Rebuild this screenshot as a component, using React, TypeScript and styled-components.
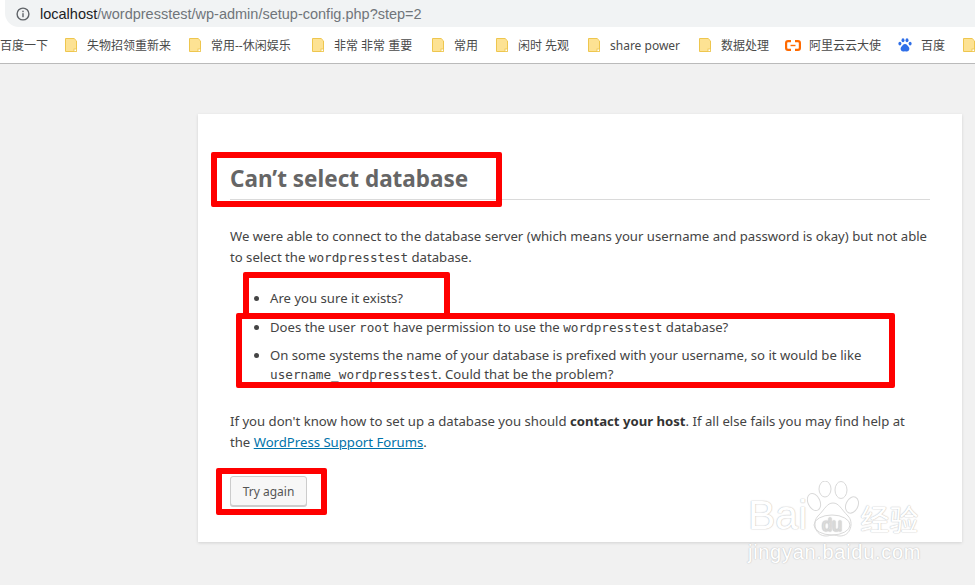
import React from 'react';
import styled, { createGlobalStyle } from 'styled-components';

const GlobalStyle = createGlobalStyle`
  html, body {
    margin: 0;
    padding: 0;
    background: #f1f1f1;
    overflow: hidden;
  }
`;

const cjk = '"Noto Sans", "Noto Sans CJK SC", sans-serif';

const Page = styled.div`
  position: relative;
  width: 975px;
  height: 585px;
  overflow: hidden;
  background: #f1f1f1;
  font-family: ${cjk};
`;

const AddressRow = styled.div`
  height: 27px;
  background: #fff;
  padding-left: 5px;
`;

const AddressBar = styled.div`
  display: flex;
  align-items: center;
  gap: 10px;
  height: 27px;
  padding-left: 11px;
  background: #f1f3f4;
  border-radius: 0 0 0 14px;
  font-family: "Liberation Sans", sans-serif;
  font-size: 14.5px;
  color: #70757a;
`;

const Host = styled.span`
  color: #202124;
`;

const Bookmarks = styled.div`
  display: flex;
  align-items: center;
  height: 36px;
  background: #fff;
  border-bottom: 1px solid #bababa;
  font-size: 12px;
  color: #4a4a4a;
  white-space: nowrap;
  overflow: hidden;
`;

const Bookmark = styled.div<{ $w: number; $gap: number }>`
  display: flex;
  align-items: center;
  flex: 0 0 ${p => p.$w}px;
  gap: ${p => p.$gap}px;
`;

const FirstBookmark = styled.div`
  flex: 0 0 65px;
`;

const Card = styled.main`
  box-sizing: border-box;
  width: 764px;
  height: 428px;
  margin: 50px 0 0 198px;
  padding: 32px;
  background: #fff;
  box-shadow: 0 1px 3px rgba(0, 0, 0, 0.13);
  color: #444;
  font-size: 13.15px;
  line-height: 21px;
`;

const Title = styled.h1`
  margin: 15px 0 0;
  height: 38px;
  border-bottom: 1px solid #dadada;
  color: #666;
  font-size: 22.5px;
  font-weight: 700;
  line-height: 35px;
`;

const Para = styled.p<{ $top: number }>`
  margin: ${p => p.$top}px 0 0;
`;

const Code = styled.code`
  font-family: "DejaVu Sans Mono", monospace;
  font-size: 12.7px;
  line-height: 1;
`;

const List = styled.ul`
  margin: 20px 0 0;
  padding: 0 0 0 40px;
`;

const Item = styled.li<{ $lh?: number }>`
  margin-bottom: 9px;
  line-height: ${p => p.$lh ?? 20}px;
`;

const Strong = styled.strong`
  color: #333;
`;

const SupportLink = styled.a`
  color: #0073aa;
  text-decoration: underline;
`;

const Button = styled.button`
  display: block;
  box-sizing: border-box;
  width: 77px;
  height: 30px;
  margin: 23px 0 0;
  padding: 0;
  background: #f7f7f7;
  border: 1px solid #ccc;
  border-radius: 3px;
  box-shadow: 0 1px 0 #ccc;
  color: #555;
  font-family: ${cjk};
  font-size: 12px;
`;

const RedBox = styled.div<{ $x: number; $y: number; $w: number; $h: number }>`
  position: absolute;
  left: ${p => p.$x}px;
  top: ${p => p.$y}px;
  width: ${p => p.$w}px;
  height: ${p => p.$h}px;
  box-sizing: border-box;
  border: 6px solid #ff0000;
  border-radius: 2px;
`;

const Watermark = styled.div`
  position: absolute;
  left: 748px;
  top: 481px;
  width: 220px;
  color: #fff;
  font-family: "Liberation Sans", sans-serif;
  text-shadow: 0 0 1.5px #c4c4c4, 0 0 1px #c4c4c4;
`;

const MarkRow = styled.div`
  display: flex;
  align-items: flex-end;
  height: 56px;
  font-size: 41px;
  line-height: 44px;
`;

const MarkCjk = styled.span`
  margin-left: 1px;
  font-family: "Noto Sans CJK SC", sans-serif;
  font-size: 29px;
  line-height: 38px;
`;

const MarkUrl = styled.div`
  margin-top: 3px;
  font-size: 20px;
  line-height: 24px;
  letter-spacing: 0.7px;
`;

const InfoIcon = () => (
  <svg width="14" height="14" viewBox="0 0 14 14" fill="none">
    <circle cx="7" cy="7" r="5.9" stroke="#5f6368" strokeWidth="1.4" />
    <rect x="6.3" y="6.2" width="1.4" height="4" fill="#5f6368" />
    <rect x="6.3" y="3.7" width="1.4" height="1.5" fill="#5f6368" />
  </svg>
);

const Folder = () => (
  <svg width="12" height="14" viewBox="0 0 12 14">
    <path d="M.5.5h8.6l2.4 2.4v10.600H.5z" fill="#fde293" stroke="#eec64e" />
    <rect x="9" y="11" width="2.5" height="2.5" fill="#fff" stroke="#eec64e" strokeWidth=".8" />
  </svg>
);

const AliyunIcon = () => (
  <svg width="16" height="11" viewBox="0 0 16 11" fill="none" stroke="#ff6a00" strokeWidth="2.2">
    <path d="M6 1.200H3Q1.100 1.200 1.100 3v5Q1.100 9.800 3 9.800h3" />
    <path d="M10 1.200h3q1.900 0 1.900 1.800v5q0 1.800-1.900 1.800h-3" />
    <path d="M5.500 5.500h5" strokeWidth="1.400" />
  </svg>
);

const BaiduIcon = () => (
  <svg width="14" height="14" viewBox="0 0 14 14" fill="#2f6fe8">
    <ellipse cx="1.900" cy="5.600" rx="1.500" ry="1.900" />
    <ellipse cx="5" cy="2.200" rx="1.500" ry="2" />
    <ellipse cx="9" cy="2.200" rx="1.500" ry="2" />
    <ellipse cx="12.100" cy="5.600" rx="1.500" ry="1.900" />
    <path d="M7 6c2 0 2.300 1.600 3.600 2.800 1.500 1.500.7 4.700-1.700 4.700-.8 0-1.200-.3-1.900-.3s-1.100.3-1.900.3c-2.400 0-3.200-3.200-1.700-4.700C4.700 7.600 5 6 7 6z" />
  </svg>
);

const WatermarkPaw = () => (
  <svg width="52" height="56" viewBox="0 0 52 56" fill="#fff" stroke="#d9d9d9">
    <ellipse cx="7" cy="21" rx="6" ry="9" transform="rotate(-25 7 21)" />
    <ellipse cx="18" cy="8" rx="6" ry="8" />
    <ellipse cx="34" cy="9" rx="6" ry="8.500" />
    <ellipse cx="45" cy="24" rx="6" ry="8.500" transform="rotate(25 45 24)" />
    <path d="M26 22c6 0 8 6 15 13 6 6 3 20-8 20-3 0-4-1-7-1s-4 1-7 1c-11 0-14-14-8-20 7-7 9-13 15-13z" />
    <ellipse cx="25" cy="44" rx="18" ry="10" fill="none" />
    <text x="25" y="50" textAnchor="middle" fontSize="18" fontFamily="Liberation Sans, sans-serif" fill="#fff" stroke="#dcdcdc" strokeWidth=".6">
      du
    </text>
  </svg>
);

const bookmarks: { label: string; w: number; gap: number; icon: React.ReactNode }[] = [
  { label: '失物招领重新来', w: 124, gap: 10, icon: <Folder /> },
  { label: '常用--休闲娱乐', w: 123, gap: 10, icon: <Folder /> },
  { label: '非常 非常 重要', w: 120, gap: 10, icon: <Folder /> },
  { label: '常用', w: 64, gap: 10, icon: <Folder /> },
  { label: '闲时 先观', w: 92, gap: 10, icon: <Folder /> },
  { label: 'share power', w: 111, gap: 10, icon: <Folder /> },
  { label: '数据处理', w: 86, gap: 10, icon: <Folder /> },
  { label: '阿里云云大使', w: 113, gap: 8, icon: <AliyunIcon /> },
  { label: '百度', w: 65, gap: 9, icon: <BaiduIcon /> },
  { label: '', w: 20, gap: 0, icon: <Folder /> },
];

export default function App() {
  return (
    <Page>
      <GlobalStyle />
      <AddressRow>
        <AddressBar>
          <InfoIcon />
          <span>
            <Host>localhost</Host>/wordpresstest/wp-admin/setup-config.php?step=2
          </span>
        </AddressBar>
      </AddressRow>
      <Bookmarks>
        <FirstBookmark>百度一下</FirstBookmark>
        {bookmarks.map(b => (
          <Bookmark key={b.label} $w={b.w} $gap={b.gap}>
            {b.icon}
            <span>{b.label}</span>
          </Bookmark>
        ))}
      </Bookmarks>
      <Card>
        <Title>Can’t select database</Title>
        <Para $top={26}>
          We were able to connect to the database server (which means your username and password is okay) but not able
          to select the <Code>wordpresstest</Code> database.
        </Para>
        <List>
          <Item>Are you sure it exists?</Item>
          <Item>
            Does the user <Code>root</Code> have permission to use the <Code>wordpresstest</Code> database?
          </Item>
          <Item $lh={19}>
            On some systems the name of your database is prefixed with your username, so it would be like{' '}
            <Code>username_wordpresstest</Code>. Could that be the problem?
          </Item>
        </List>
        <Para $top={27}>
          If you don't know how to set up a database you should <Strong>contact your host</Strong>. If all else fails
          you may find help at
          <br />
          the <SupportLink href="#">WordPress Support Forums</SupportLink>.
        </Para>
        <Button>Try again</Button>
      </Card>
      <RedBox $x={211} $y={152} $w={291} $h={55} />
      <RedBox $x={243} $y={272} $w={207} $h={47} />
      <RedBox $x={236} $y={313} $w={659} $h={75} />
      <RedBox $x={216} $y={468} $w={111} $h={47} />
      <Watermark>
        <MarkRow>
          Bai
          <WatermarkPaw />
          <MarkCjk>经验</MarkCjk>
        </MarkRow>
        <MarkUrl>jingyan.baidu.com</MarkUrl>
      </Watermark>
    </Page>
  );
}
